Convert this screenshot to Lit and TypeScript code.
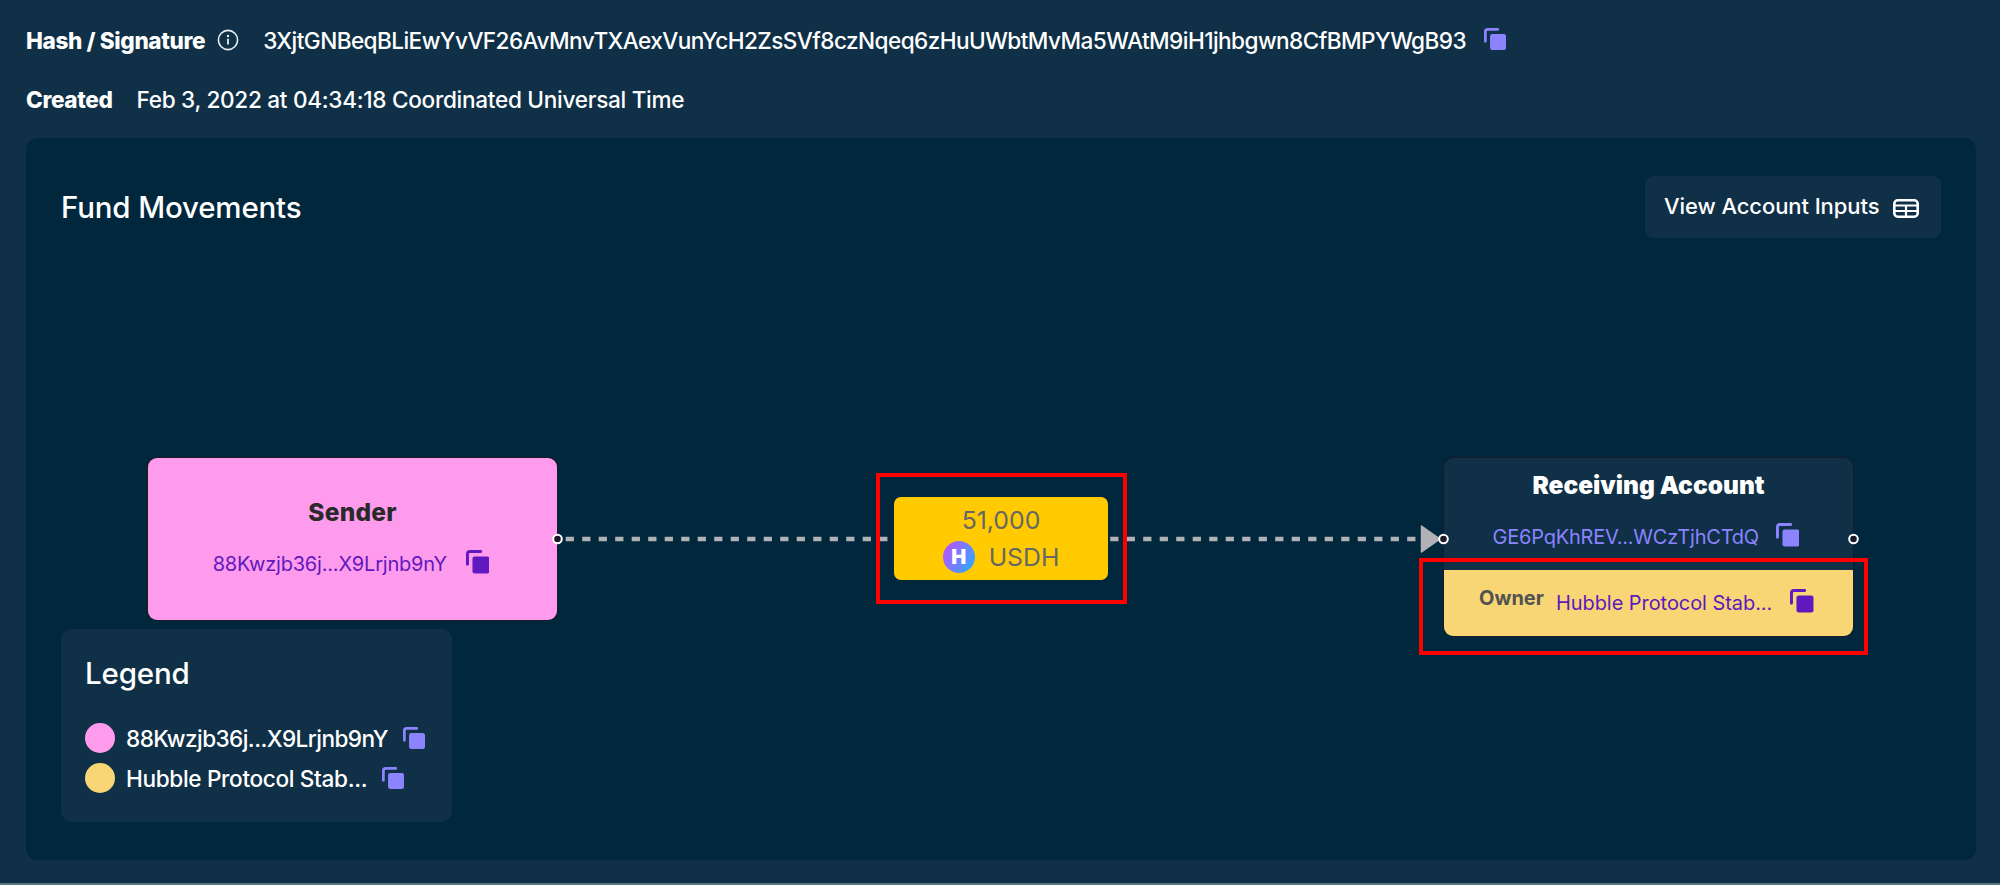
import { LitElement, html, css, svg } from 'lit';
import { customElement, property } from 'lit/decorators.js';

const HASH = '3XjtGNBeqBLiEwYvVF26AvMnvTXAexVunYcH2ZsSVf8czNqeq6zHuUWbtMvMa5WAtM9iH1jhbgwn8CfBMPYWgB93';

const LEGEND = [
    { color: '#ff9bed', label: '88Kwzjb36j...X9Lrjnb9nY', kind: 'address' },
    { color: '#f8d675', label: 'Hubble Protocol Stab...', kind: 'name' },
];

// Handles on the sides of the nodes
const HANDLES = [557.5, 1443.5, 1853.5];

@customElement('copy-icon')
export class CopyIcon extends LitElement {
    static styles = css`
        :host {
            display: block;
            flex: none;
            width: 23.5px;
            height: 23.5px;
        }

        svg {
            display: block;
            width: 100%;
            height: 100%;
        }
    `;

    render() {
        return html`
            <svg viewBox="0 0 24 24">
                <path d="M1.5 14.5V4Q1.5 1.5 4 1.5H15" fill="none" stroke="currentColor" stroke-width="3" stroke-linecap="round"></path>
                <rect x="6.6" y="6.6" width="17.4" height="17.4" rx="2.4" fill="currentColor"></rect>
            </svg>
        `;
    }
}

@customElement('legend-row')
export class LegendRow extends LitElement {
    @property() color = '';
    @property() label = '';
    @property() kind = '';

    static styles = css`
        :host {
            display: flex;
            align-items: center;
            height: 40.5px;
            color: #ffffff;
            font-size: 22.6px;
            font-weight: 500;
        }

        .dot {
            flex: none;
            width: 30px;
            height: 30px;
            border-radius: 50%;
            margin-right: 11px;
        }

        .label {
            white-space: nowrap;
            padding-top: 1px;
            margin-right: 15px;
        }

        .address {
            letter-spacing: -0.58px;
        }

        .name {
            letter-spacing: -0.34px;
        }

        copy-icon {
            width: 22px;
            height: 22px;
            color: #8c83ff;
        }
    `;

    render() {
        return html`
            <div class="dot" style="background: ${this.color}"></div>
            <div class="label ${this.kind}">${this.label}</div>
            <copy-icon></copy-icon>
        `;
    }
}

@customElement('app-root')
export class AppRoot extends LitElement {
    static styles = css`
        :host {
            display: flex;
            flex-direction: column;
            box-sizing: border-box;
            width: 2000px;
            height: 885px;
            padding: 17px 24px 23px 26px;
            overflow: hidden;
            background: #0f3047;
            border-bottom: 2px solid #5b7282;
            font-family: Inter, "Liberation Sans", sans-serif;
            color: #ffffff;
        }

        /* Header rows */
        .row {
            display: flex;
            align-items: center;
            height: 46px;
            font-size: 22.6px;
            font-weight: 500;
            white-space: nowrap;
        }

        .created {
            margin: 13px 0 16px;
        }

        .row b {
            font-weight: 800;
            letter-spacing: -0.38px;
        }

        .info {
            width: 22px;
            height: 22px;
            margin: 0 24px 0 12px;
        }

        .hash {
            letter-spacing: -0.57px;
        }

        .row copy-icon {
            width: 22px;
            height: 22px;
            margin: -2px 0 0 18px;
            color: #8c83ff;
        }

        .date {
            margin-left: 24px;
            letter-spacing: -0.3px;
        }

        /* Panel */
        .panel {
            flex: 1;
            display: flex;
            flex-direction: column;
            justify-content: space-between;
            box-sizing: border-box;
            padding: 38px 35px;
            border-radius: 12px;
            background: #00273b;
        }

        .top {
            display: flex;
            justify-content: space-between;
            align-items: center;
        }

        h2 {
            margin: 0;
            font-size: 29.5px;
            font-weight: 500;
            line-height: 36px;
            letter-spacing: -0.17px;
        }

        .view {
            display: flex;
            align-items: center;
            box-sizing: border-box;
            width: 296px;
            height: 62px;
            padding: 0 22px 0 19px;
            justify-content: space-between;
            border: 0;
            border-radius: 8px;
            background: #0f3047;
            color: #ffffff;
            font: 500 22px Inter, sans-serif;
            letter-spacing: -0.08px;
            white-space: nowrap;
        }

        .view span {
            margin-top: -2px;
        }

        .view svg {
            width: 26px;
            height: 19px;
            margin-top: 3px;
        }

        .legend {
            box-sizing: border-box;
            width: 391px;
            height: 193px;
            padding: 26px 24px;
            border-radius: 11px;
            background: #0f3047;
        }

        .legend h2 {
            margin-bottom: 26.5px;
        }

        /* Flow canvas */
        .edges {
            position: absolute;
            left: 0;
            top: 0;
            pointer-events: none;
        }

        .node {
            position: absolute;
            box-sizing: border-box;
            display: flex;
            flex-direction: column;
            align-items: center;
            white-space: nowrap;
            border-radius: 9px;
            overflow: hidden;
            box-shadow: 0 0 0 1px #1a192b;
        }

        .sender {
            left: 148px;
            top: 458px;
            width: 409px;
            height: 162px;
            padding-top: 39px;
            background: #ff9bed;
            color: #2a2a2a;
        }

        .title {
            font-size: 24.5px;
            font-weight: 800;
            line-height: 30px;
        }

        .sender .title {
            letter-spacing: 0.2px;
        }

        .address {
            display: flex;
            align-items: center;
            font-size: 20px;
            line-height: 26px;
            letter-spacing: -0.2px;
            color: #5f19be;
        }

        .sender .address {
            margin-top: 24px;
            padding-right: 3px;
            gap: 19px;
        }

        .address copy-icon {
            margin-top: -4px;
        }

        .receiver {
            left: 1444px;
            top: 458px;
            width: 409px;
            height: 178px;
            padding-top: 12px;
            background: #0f3047;
        }

        .receiver .title {
            font-weight: 900;
        }

        .receiver > .address {
            margin-top: 24px;
            padding-right: 5px;
            gap: 17px;
            letter-spacing: -0.22px;
            color: #8c83ff;
        }

        .owner {
            display: flex;
            box-sizing: border-box;
            width: 100%;
            height: 66px;
            margin-top: auto;
            padding: 15px 0 0 35px;
            background: #f8d675;
            font-size: 20px;
        }

        .owner b {
            line-height: 26px;
            color: #525252;
        }

        .owner .address {
            height: 26px;
            margin: 5px 0 0 12px;
            gap: 18px;
            letter-spacing: -0.06px;
        }

        .amount {
            left: 894px;
            top: 497px;
            width: 214px;
            height: 83px;
            padding-top: 5px;
            border-radius: 7px;
            background: #ffcb00;
            color: #666666;
            font-size: 24.8px;
            line-height: 36.5px;
            box-shadow: none;
        }

        .token {
            display: flex;
            align-items: center;
            gap: 14px;
        }

        .logo {
            display: flex;
            align-items: center;
            justify-content: center;
            width: 32px;
            height: 32px;
            border-radius: 50%;
            background: linear-gradient(120deg, #aa5cff 20%, #38a3ff 85%);
            color: #ffffff;
            font-size: 20px;
            font-weight: 900;
        }

        .mark {
            position: absolute;
            box-sizing: border-box;
            border: 4px solid #ff0000;
        }

        .mark.transfer {
            left: 876px;
            top: 473px;
            width: 251px;
            height: 131px;
        }

        .mark.program {
            left: 1419px;
            top: 558px;
            width: 449px;
            height: 97px;
        }
    `;

    render() {
        return html`
            <div class="row">
                <b>Hash / Signature</b>
                <svg class="info" viewBox="0 0 22 22">
                    <circle cx="11" cy="11" r="9.6" fill="none" stroke="#e8edf0" stroke-width="1.6"></circle>
                    <path d="M11 9.8V15.5" stroke="#e8edf0" stroke-width="1.8"></path>
                    <circle cx="11" cy="7" r="1.2" fill="#e8edf0"></circle>
                </svg>
                <span class="hash">${HASH}</span>
                <copy-icon></copy-icon>
            </div>
            <div class="row created">
                <b>Created</b>
                <span class="date">Feb 3, 2022 at 04:34:18 Coordinated Universal Time</span>
            </div>
            <div class="panel">
                <div class="top">
                    <h2>Fund Movements</h2>
                    <button class="view">
                        <span>View Account Inputs</span>
                        <svg viewBox="0 0 26 19">
                            <rect x="1.3" y="1.3" width="23.4" height="16.4" rx="3.5" fill="none" stroke="#fff" stroke-width="2.6"></rect>
                            <path d="M1 6.5H25M1 12H25M13 6.5V18" fill="none" stroke="#fff" stroke-width="2.2"></path>
                        </svg>
                    </button>
                </div>
                <div class="legend">
                    <h2>Legend</h2>
                    ${LEGEND.map((l) => html`<legend-row .color=${l.color} .label=${l.label} .kind=${l.kind}></legend-row>`)}
                </div>
            </div>

            <div class="node sender">
                <div class="title">Sender</div>
                <div class="address"><span>88Kwzjb36j...X9Lrjnb9nY</span><copy-icon></copy-icon></div>
            </div>
            <div class="node receiver">
                <div class="title">Receiving Account</div>
                <div class="address"><span>GE6PqKhREV...WCzTjhCTdQ</span><copy-icon></copy-icon></div>
                <div class="owner">
                    <b>Owner</b>
                    <div class="address"><span>Hubble Protocol Stab...</span><copy-icon></copy-icon></div>
                </div>
            </div>
            <svg class="edges" width="2000" height="883">
                <path d="M565.7 539H1420" stroke="#b1b1b7" stroke-width="4.5" stroke-dasharray="8.25"></path>
                <path d="M1421.5 526L1440 539L1421.5 552Z" fill="#b1b1b7" stroke="#b1b1b7" stroke-width="1.5" stroke-linejoin="round"></path>
                ${HANDLES.map((x) => svg`<circle cx=${x} cy="539" r="4.3" fill="#1a192b" stroke="#fff" stroke-width="2"></circle>`)}
            </svg>
            <div class="node amount">
                <div>51,000</div>
                <div class="token"><div class="logo">H</div><span>USDH</span></div>
            </div>
            <div class="mark transfer"></div>
            <div class="mark program"></div>
        `;
    }
}
